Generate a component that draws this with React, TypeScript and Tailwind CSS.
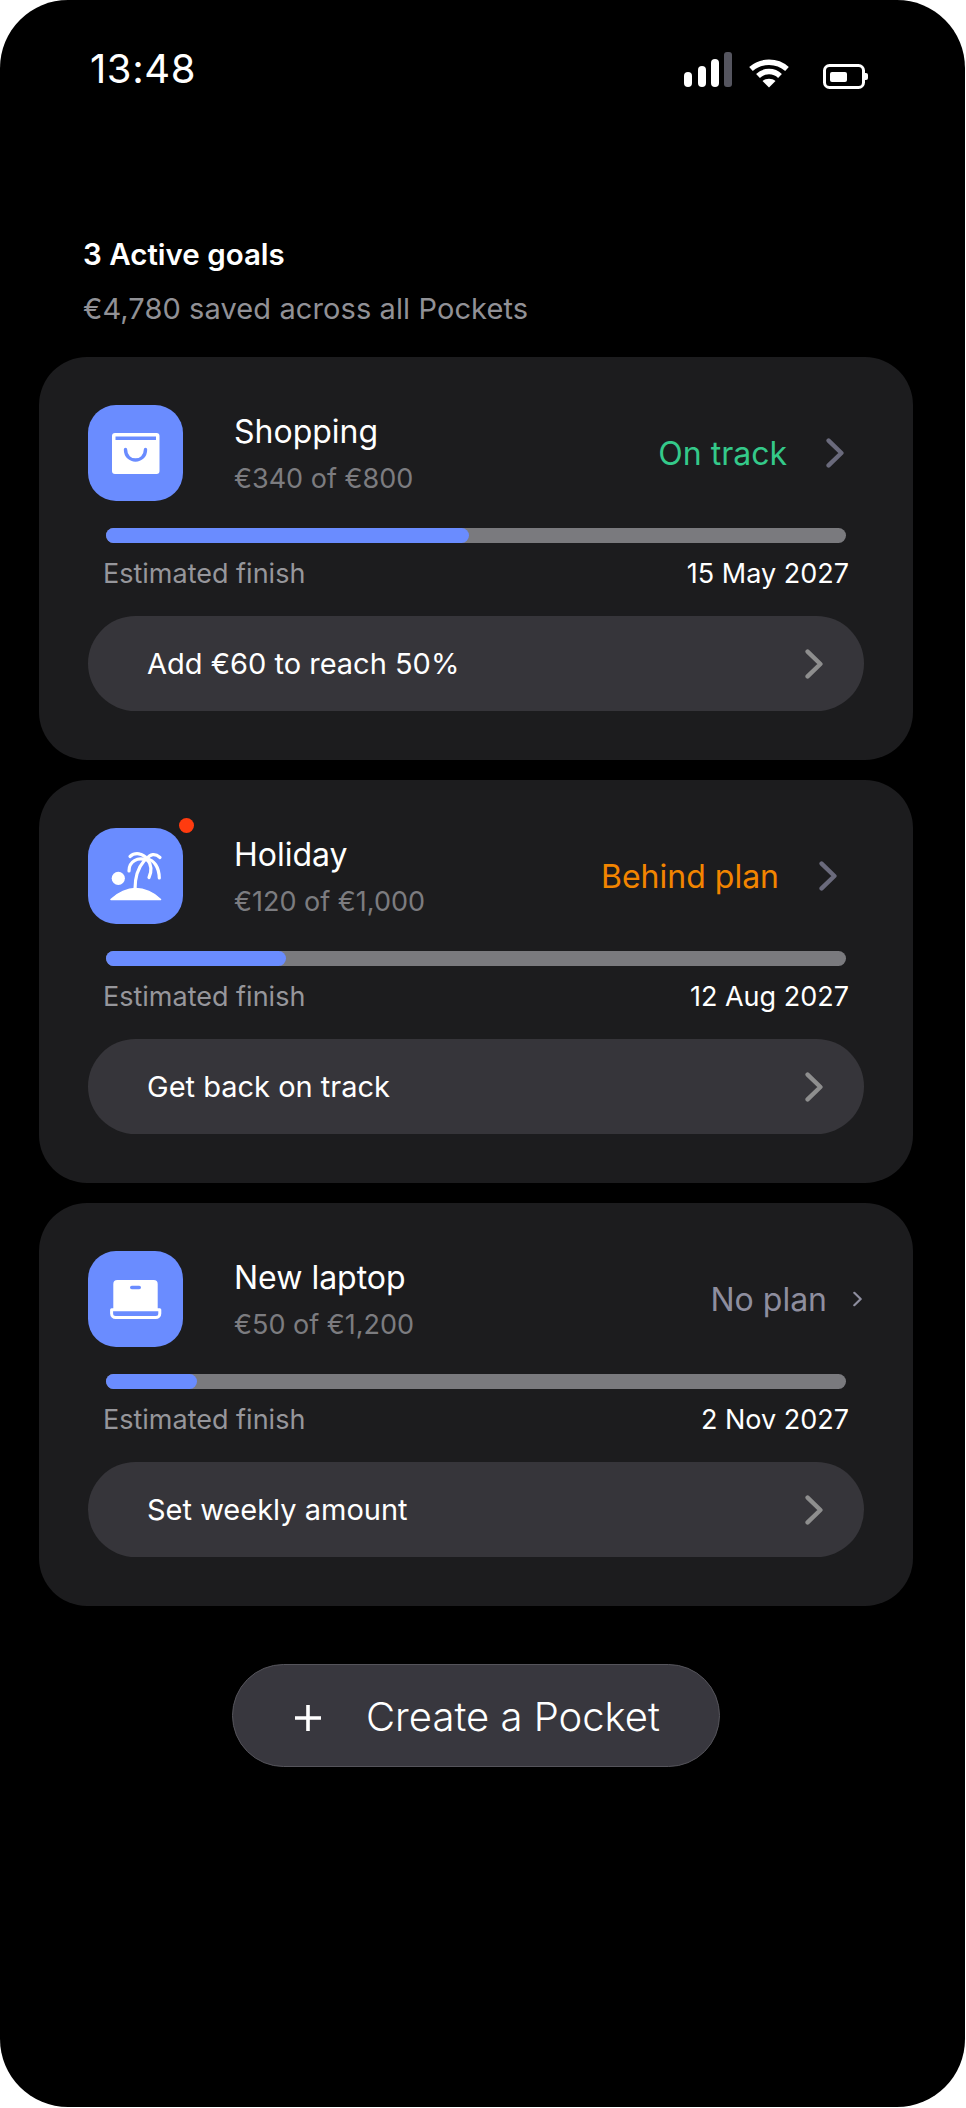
import React from "react";

const Chevron = ({ color, className }: { color: string; className: string }) => (
  <svg viewBox="0 0 18 30" className={className} fill="none" stroke={color} strokeWidth="4.4" strokeLinecap="round" strokeLinejoin="round">
    <path d="M2.6 2.6 L15.4 15 L2.6 27.4" />
  </svg>
);

const BagIcon = () => (
  <svg viewBox="0 0 95 95" className="w-[95px] h-[95px]">
    <rect x="24" y="28" width="47.5" height="41" rx="3" fill="#fff" />
    <rect x="27.5" y="31.5" width="40.5" height="3.5" fill="#6a8cff" />
    <path d="M37.5 44.5 C37.5 58.5 57.5 58.5 57.5 44.5" fill="none" stroke="#6a8cff" strokeWidth="3.4" strokeLinecap="round" />
  </svg>
);

const IslandIcon = () => (
  <svg viewBox="0 0 95 95" className="w-[95px] h-[95px]">
    <circle cx="30.3" cy="50.3" r="6.6" fill="#fff" />
    <path d="M23 71.5 C30 64.5 40 60.5 47.5 60.5 C56 60.5 66 64.5 72.5 71.5 Z" fill="#fff" stroke="#fff" strokeWidth="1.6" strokeLinejoin="round" />
    <g fill="none" stroke="#fff" strokeWidth="3.2" strokeLinecap="round">
      <path d="M47 61 C47 50 49 41 56 33" />
      <path d="M41 43 C41 33 50 29 58 32" />
      <path d="M42 28.5 C47 24 55 25 59 31" />
      <path d="M59 31 C62 26 67 25 72 29.5" />
      <path d="M59 31 C66 32 71 39 71.3 50" />
      <path d="M59 31 C63 36 64 43 61 49.5" />
    </g>
  </svg>
);

const LaptopIcon = () => (
  <svg viewBox="0 0 95 95" className="w-[95px] h-[95px]">
    <path d="M25.3 59 V33 a4 4 0 0 1 4-4 H65.7 a4 4 0 0 1 4 4 V59 Z" fill="#fff" />
    <rect x="42" y="34.7" width="11" height="3.6" rx="1.8" fill="#6a8cff" />
    <path d="M23.6 58.8 H71.8 V62.5 a4 4 0 0 1-4 4 H27.6 a4 4 0 0 1-4-4 Z" fill="#6a8cff" stroke="#fff" strokeWidth="3" strokeLinejoin="round" />
  </svg>
);

const goals = [
  {
    title: "Shopping", amount: "€340 of €800", status: "On track", statusCls: "text-[#34c98a]",
    clusterCls: "mr-[20px] gap-[39px]", chevCls: "w-[18px] h-[30px]", chevColor: "#6a6a7c",
    fillCls: "w-[363px]", date: "15 May 2027", action: "Add €60 to reach 50%", Icon: BagIcon, dot: false,
  },
  {
    title: "Holiday", amount: "€120 of €1,000", status: "Behind plan", statusCls: "text-[#f28500]",
    clusterCls: "mr-[27px] gap-[40px]", chevCls: "w-[18px] h-[30px]", chevColor: "#6a6a7c",
    fillCls: "w-[180px]", date: "12 Aug 2027", action: "Get back on track", Icon: IslandIcon, dot: true,
  },
  {
    title: "New laptop", amount: "€50 of €1,200", status: "No plan", statusCls: "text-[#8e8e9f]",
    clusterCls: "mr-[2px] gap-[26px]", chevCls: "w-[9px] h-[16px]", chevColor: "#8e8e9f",
    fillCls: "w-[91px]", date: "2 Nov 2027", action: "Set weekly amount", Icon: LaptopIcon, dot: false,
  },
];

export default function App() {
  return (
    <div className="w-[966px] h-[2108px] bg-white font-['Inter','Liberation_Sans',sans-serif]">
      <div className="w-[965px] h-[2107px] bg-black rounded-[68px] text-white flex flex-col">
        <div className="flex justify-between items-start pl-[90px] pr-[97px] pt-[45px] h-[237px]">
          <span className="text-[40px] leading-[48px] font-normal tracking-[0.6px]">13:48</span>
          <div className="flex items-start pt-[7px]">
            <svg viewBox="0 0 48 35" className="w-[48px] h-[35px]">
              <rect x="0" y="20" width="8" height="15" rx="4" fill="#fff" />
              <rect x="14" y="14" width="8" height="21" rx="4" fill="#fff" />
              <rect x="27" y="7" width="8" height="28" rx="4" fill="#fff" />
              <rect x="40" y="0" width="8" height="35" rx="3" fill="#55555f" />
            </svg>
            <svg viewBox="0 0 40 30" className="w-[40px] h-[30px] ml-[17px] mt-[6px]">
              <g fill="none" stroke="#fff" strokeWidth="5.4" strokeLinecap="butt">
                <path d="M2 11 C12 2 28 2 38 11" />
                <path d="M9 18 C15 12 25 12 31 18" />
              </g>
              <path d="M13.5 23 C17 20 23 20 26.5 23 L20 29.5 Z" fill="#fff" />
            </svg>
            <svg viewBox="0 0 45 25" className="w-[45px] h-[25px] ml-[34px] mt-[12px]">
              <rect x="1.5" y="1.5" width="39" height="22" rx="5" fill="none" stroke="#fff" strokeWidth="3" />
              <rect x="7" y="8" width="17" height="10" rx="2" fill="#fff" />
              <path d="M42 9 h1 a2 2 0 0 1 2 2 v3 a2 2 0 0 1-2 2 h-1 Z" fill="#fff" />
            </svg>
          </div>
        </div>

        <div className="pl-[83px] h-[120px]">
          <p className="text-[29.5px] leading-[34px] font-semibold">3 Active goals</p>
          <p className="mt-[20px] text-[29px] leading-[36px] tracking-[0.1px] text-[#919196]">€4,780 saved across all Pockets</p>
        </div>

        <div className="flex flex-col gap-[20px] ml-[39px] w-[874px]">
          {goals.map((g) => (
            <div key={g.title} className="h-[403px] rounded-[48px] bg-[#1c1c1e] px-[49px] pt-[48px]">
              <div className="flex items-center h-[96px]">
                <div className="relative w-[95px] h-[96px] rounded-[28px] bg-[#6a8cff] shrink-0">
                  <g.Icon />
                  {g.dot && <span className="absolute right-[-11px] top-[-10px] w-[15px] h-[15px] rounded-full bg-[#ff3b0f]" />}
                </div>
                <div className="ml-[51px] flex-1">
                  <p className="text-[32px] leading-[39px]">{g.title}</p>
                  <p className="mt-[11px] text-[27px] leading-[33px] text-[#7c7c80]">{g.amount}</p>
                </div>
                <div className={`flex items-center ${g.clusterCls}`}>
                  <span className={`text-[32px] leading-[39px] ${g.statusCls}`}>{g.status}</span>
                  <Chevron color={g.chevColor} className={g.chevCls} />
                </div>
              </div>
              <div className="mx-[18px] mt-[27px] h-[15px] rounded-full bg-[#7a7a7e]">
                <div className={`h-full rounded-full bg-[#6a8cff] ${g.fillCls}`} />
              </div>
              <div className="flex justify-between ml-[15px] mr-[15px] mt-[14px] text-[27px] leading-[33px]">
                <span className="text-[#96969b]">Estimated finish</span>
                <span>{g.date}</span>
              </div>
              <div className="mt-[26px] h-[95px] rounded-full bg-[#36353a] flex items-center justify-between pl-[59px] pr-[41px]">
                <span className="text-[29px] leading-[36px]">{g.action}</span>
                <Chevron color="#8e8e8e" className="w-[18px] h-[30px]" />
              </div>
            </div>
          ))}
        </div>

        <div className="flex justify-start pt-[58px] pl-[232px]">
          <div className="w-[488px] h-[103px] rounded-full bg-[#38373e] border border-[#55545b] flex items-center pl-[62px]">
            <svg viewBox="0 0 26 26" className="w-[26px] h-[26px] mt-[5px]" fill="none" stroke="#fff" strokeWidth="3.6">
              <path d="M0 13 H26 M13 0 V26" />
            </svg>
            <span className="ml-[45px] mt-[3px] text-[40px] leading-[48px] font-light">Create a Pocket</span>
          </div>
        </div>
      </div>
    </div>
  );
}
